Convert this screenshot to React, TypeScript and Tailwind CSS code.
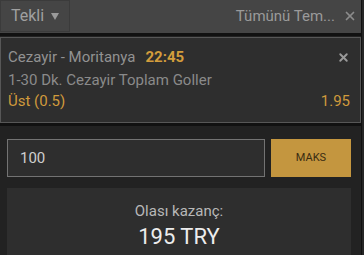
import { X } from "lucide-react";

export default function App() {
  return (
    <div className="flex h-[255px] w-[364px] overflow-hidden bg-[#222] font-['Roboto',sans-serif]">
      <div className="flex w-[361px] shrink-0 flex-col">
        {/* header */}
        <div className="flex h-[33px] shrink-0 items-start justify-between bg-[#454545]">
          <div className="flex h-[32px] w-[70px] items-center gap-[7px] border border-[#3b3b3b] pl-[10px]">
            <span className="text-[16px] leading-[20px] text-[#a0a0a0]">Tekli</span>
            <svg width="8" height="7" viewBox="0 0 8 7" className="mt-[1px]">
              <path d="M0 0h8L4 7z" fill="#9a9a9a" />
            </svg>
          </div>
          <div className="flex h-[32px] items-center gap-[8px] pr-[4px]">
            <span className="text-[15px] leading-[20px] text-[#9a9a9a]">Tümünü Tem...</span>
            <X className="h-[14px] w-[14px] text-[#8c8c8c]" strokeWidth={3} />
          </div>
        </div>
        <div className="h-[3px] shrink-0 bg-[#111]" />

        {/* bet card */}
        <div className="mt-[1px] h-[86px] shrink-0 border border-[#575757] bg-[#2e2e2e] px-[7px] pt-[10px] text-[15px] leading-[18px]">
          <div className="flex items-center justify-between">
            <div className="flex items-center gap-[10px]">
              <span className="text-[#929292]">Cezayir - Moritanya</span>
              <span className="font-bold text-[#d39d3c]">22:45</span>
            </div>
            <X className="mr-[3px] h-[13px] w-[13px] text-[#9a9a9a]" strokeWidth={3.5} />
          </div>
          <p className="mt-[5px] text-[#8a8a8a]">1-30 Dk. Cezayir Toplam Goller</p>
          <div className="mt-[3px] flex items-center justify-between text-[#d09a3c]">
            <span>Üst (0.5)</span>
            <span className="mr-[3px]">1.95</span>
          </div>
        </div>
        <div className="h-[3px] shrink-0 bg-[#111]" />

        {/* stake */}
        <div className="flex min-h-0 flex-1 flex-col pl-[7px] pr-[10px] pt-[13px]">
          <div className="flex shrink-0 gap-[6px]">
            <input
              className="h-[38px] w-[258px] border border-[#737373] bg-[#2e2e2e] px-[12px] text-[15px] text-[#cfcfcf] outline-none"
              defaultValue="100"
            />
            <button className="h-[38px] flex-1 bg-[#c4963f] text-[11px] text-[#3a2c12]">MAKS</button>
          </div>
          <div className="mt-[11px] flex flex-1 flex-col items-center bg-[#2e2e2e] pt-[13px]">
            <span className="text-[15px] leading-[20px] text-[#b8b8b8]">Olası kazanç:</span>
            <span className="mt-[2px] text-[22px] leading-[28px] text-[#ececec]">195 TRY</span>
          </div>
        </div>
      </div>
      <div className="w-[3px] border-l border-[#111] bg-[#262626]" />
    </div>
  );
}
